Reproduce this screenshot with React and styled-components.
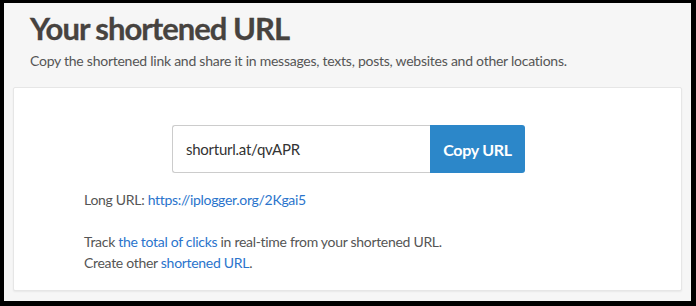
import React from "react";
import styled, { createGlobalStyle } from "styled-components";

const GlobalStyle = createGlobalStyle`
  html, body {
    margin: 0;
    padding: 0;
    background: #000;
  }
  * {
    box-sizing: border-box;
  }
`;

const Frame = styled.div`
  width: 696px;
  height: 306px;
  border-style: solid;
  border-color: #000;
  border-width: 3px 5px 5px 4px;
  background: #f6f6f6;
  font-family: "Lato", "Open Sans", sans-serif;
  overflow: hidden;
  padding: 0 9px 0 9px;
`;

const Title = styled.h1`
  margin: 5px 0 0 17px;
  font-size: 31px;
  font-weight: 700;
  letter-spacing: -1px;
  line-height: 40px;
  color: #47433f;
  -webkit-text-stroke: 0.3px #47433f;
`;

const Subtitle = styled.p`
  margin: 3px 0 0 17px;
  font-size: 14px;
  letter-spacing: -0.25px;
  line-height: 20px;
  color: #555;
`;

const Card = styled.section`
  margin-top: 16px;
  height: 204px;
  background: #fff;
  border: 1px solid #e6e6e6;
  border-radius: 2px;
  box-shadow: 0 1px 2px rgba(0, 0, 0, 0.06);
  padding: 37px 0 0 70px;
`;

const CopyRow = styled.div`
  display: flex;
  margin-left: 88px;
`;

const UrlInput = styled.div`
  width: 258px;
  height: 48px;
  border: 1px solid #ccc;
  border-right: none;
  border-radius: 3px 0 0 3px;
  padding-left: 13px;
  display: flex;
  align-items: center;
  font-size: 15px;
  letter-spacing: -0.25px;
  color: #333;
`;

const CopyButton = styled.button`
  width: 95px;
  height: 48px;
  border: none;
  border-radius: 0 3px 3px 0;
  background: #2c87c9;
  color: #fff;
  font-family: "Lato", sans-serif;
  font-weight: 700;
  font-size: 16px;
  letter-spacing: -0.3px;
  cursor: pointer;
`;

const Line = styled.p`
  margin: ${(p) => p.$top || 0}px 0 0 0;
  font-size: 14px;
  letter-spacing: -0.3px;
  line-height: 21px;
  color: #555;
`;

const Link = styled.a`
  color: #2a74cc;
  text-decoration: none;
`;

export default function App() {
  return (
    <>
      <GlobalStyle />
      <Frame>
        <Title>Your shortened URL</Title>
        <Subtitle>
          Copy the shortened link and share it in messages, texts, posts,
          websites and other locations.
        </Subtitle>
        <Card>
          <CopyRow>
            <UrlInput>shorturl.at/qvAPR</UrlInput>
            <CopyButton>Copy URL</CopyButton>
          </CopyRow>
          <Line $top={16}>
            Long URL: <Link href="#">https://iplogger.org/2Kgai5</Link>
          </Line>
          <Line $top={21}>
            Track <Link href="#">the total of clicks</Link> in real-time from
            your shortened URL.
          </Line>
          <Line>
            Create other <Link href="#">shortened URL</Link>.
          </Line>
        </Card>
      </Frame>
    </>
  );
}
